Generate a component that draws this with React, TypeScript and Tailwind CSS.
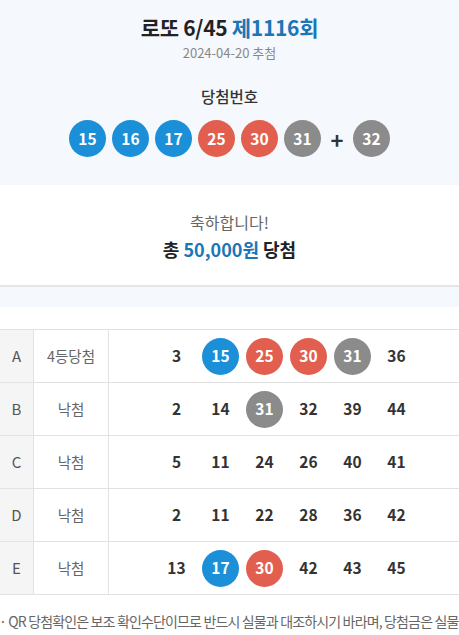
import React from "react";

type Ball = { n: number };

const ballColor = (n: number) => {
  if (n <= 10) return "bg-[#f1b400]";
  if (n <= 20) return "bg-[#1b8fd7]";
  if (n <= 30) return "bg-[#e25f4f]";
  if (n <= 40) return "bg-[#8b8b8b]";
  return "bg-[#6fbf45]";
};

const WIN = [15, 16, 17, 25, 30, 31];
const BONUS = 32;

const GAMES = [
  { key: "A", result: "4등당첨", nums: [3, 15, 25, 30, 31, 36] },
  { key: "B", result: "낙첨", nums: [2, 14, 31, 32, 39, 44] },
  { key: "C", result: "낙첨", nums: [5, 11, 24, 26, 40, 41] },
  { key: "D", result: "낙첨", nums: [2, 11, 22, 28, 36, 42] },
  { key: "E", result: "낙첨", nums: [13, 17, 30, 42, 43, 45] },
];

const LottoBall: React.FC<Ball> = ({ n }) => (
  <div className={`w-[37px] h-[37px] rounded-full flex items-center justify-center text-white text-[15.5px] font-bold ${ballColor(n)}`}>
    {n}
  </div>
);

export default function App() {
  return (
    <div
      className="w-[459px] h-[635px] overflow-hidden bg-white text-[#333]"
      style={{ fontFamily: '"Noto Sans CJK KR", "Noto Sans", sans-serif' }}
    >
      {/* 회차 + 당첨번호 */}
      <div className="h-[185px] bg-[#f5f8fc] flex flex-col items-center">
        <div className="mt-[12px] h-[30px] leading-[30px] text-[21px] font-bold text-[#222] tracking-[-0.3px]">
          로또 6/45 <span className="text-[#1b76b7]">제1116회</span>
        </div>
        <div className="h-[22px] leading-[22px] text-[13px] text-[#888]">2024-04-20 추첨</div>
        <div className="mt-[20px] h-[24px] leading-[24px] text-[15.5px] font-medium text-[#333]">당첨번호</div>
        <div className="mt-[12px] flex items-center gap-[6px]">
          {WIN.map(n => <LottoBall key={n} n={n} />)}
          <div className="w-[20px] text-center text-[22px] font-bold leading-none text-[#333]">+</div>
          <LottoBall n={BONUS} />
        </div>
      </div>

      {/* 결과 */}
      <div className="h-[102px] flex flex-col items-center border-b-2 border-[#e4e6ea]">
        <div className="mt-[25px] h-[24px] leading-[24px] text-[16px] text-[#666]">축하합니다!</div>
        <div className="mt-[1px] h-[28px] leading-[28px] text-[18px] font-bold text-[#222]">
          총 <span className="text-[#1b76b7]">50,000원</span> 당첨
        </div>
      </div>
      <div className="h-[20px] bg-[#f5f8fc]" />
      <div className="h-[22px]" />

      {/* 게임별 결과 */}
      <div className="border-t border-[#e2e2e2]">
        {GAMES.map(g => (
          <div key={g.key} className="flex h-[53px] border-b border-[#e2e2e2]">
            <div className="w-[34px] flex items-center justify-center bg-[#f5f5f5] border-r border-[#e2e2e2] text-[15px] text-[#555]">
              {g.key}
            </div>
            <div className="w-[75px] flex items-center justify-center border-r border-[#e2e2e2] text-[14.5px] text-[#666]">
              {g.result}
            </div>
            <div className="flex-1 flex items-center justify-center gap-[7px] pl-[5px]">
              {g.nums.map(n =>
                WIN.includes(n) ? (
                  <LottoBall key={n} n={n} />
                ) : (
                  <div key={n} className="w-[37px] text-center text-[15.5px] font-bold text-[#333]">{n}</div>
                )
              )}
            </div>
          </div>
        ))}
      </div>

      <div className="mt-[16px] whitespace-nowrap text-[14px] tracking-[-0.85px] text-[#666] -ml-[1px]">
        · QR 당첨확인은 보조 확인수단이므로 반드시 실물과 대조하시기 바라며, 당첨금은 실물
      </div>
    </div>
  );
}
